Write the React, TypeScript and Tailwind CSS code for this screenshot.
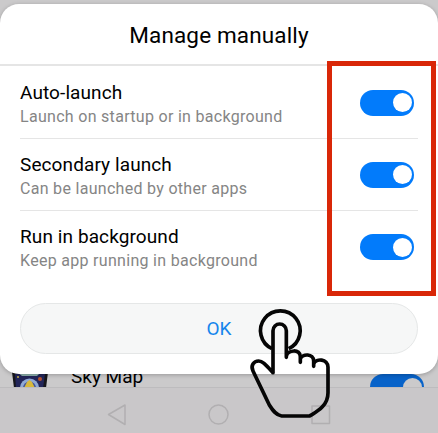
import React from "react";

const rows = [
  { title: "Auto-launch", note: "Launch on startup or in background" },
  { title: "Secondary launch", note: "Can be launched by other apps" },
  { title: "Run in background", note: "Keep app running in background" },
];

function Switch() {
  return (
    <span className="flex h-[26px] w-[54px] shrink-0 items-center justify-end rounded-full bg-[#027bfb] pr-[2px]">
      <span className="size-[19px] rounded-full bg-white" />
    </span>
  );
}

function SkyMapIcon() {
  return (
    <svg width="36" height="16" viewBox="0 0 36 16" className="shrink-0">
      <path d="M0 0H36L34 16H2Z" fill="#17171b" />
      <path d="M3 2H33L31 16H4Z" fill="#23265a" />
      <path d="M5 0H29L25 4H10Z" fill="#8fb3ae" />
      <path d="M8 16A9.5 9.5 0 0 1 27 16Z" fill="#8fa9d4" />
      <path d="M11 16A6.5 6.5 0 0 1 24 16Z" fill="#40529a" />
      <path d="M12 16L15 10L17.5 8L20 10L23 16Z" fill="#d8b93c" />
      <circle cx="28" cy="7" r="2" fill="#b9532f" />
      <circle cx="6" cy="5" r="1" fill="#cdb64a" />
    </svg>
  );
}

function TapHand() {
  return (
    <svg
      viewBox="0 0 300 399"
      className="absolute left-[240px] top-[300px] h-[133px] w-[100px]"
      fill="none"
      stroke="#050505"
      strokeWidth="11"
      strokeLinejoin="round"
      strokeLinecap="round"
    >
      <path d="M96 146A59.500 59.500 0 1 1 146 146" strokeLinecap="butt" />
      <path d="M99 218V92a20 20 0 0 1 40 0V172M139 168C144 149 181 146 181 170V187M181 177C187 160 221 160 221 183V199M221 192C228 174 264 176 264 202V278C264 320 226 337 209 348H125C108 346 98 331 88 315L39 213C31 197 41 183 56 183C67 183 75 192 99 218" />
    </svg>
  );
}

export default function App() {
  return (
    <div className="relative flex h-[433px] w-[438px] flex-col overflow-hidden bg-[#cbcacb] font-['Roboto',sans-serif] text-black">
      <div className="mt-[372px] flex h-[16px] shrink-0 items-start overflow-hidden border-b border-[#bdbcbe] pl-[12px]">
        <SkyMapIcon />
        <span className="-mt-[5px] ml-[23px] text-[19px] leading-[20px]">Sky Map</span>
        <span className="ml-auto mr-[14px] mt-[2px] flex h-[26px] w-[54px] shrink-0 items-center justify-end rounded-full bg-[#0863c9] pr-[2px]">
          <span className="size-[19px] rounded-full bg-[#cbcacb]" />
        </span>
      </div>
      <div className="flex h-[45px] items-center bg-[#c9c7c9]">
        <svg width="438" height="45" fill="none" stroke="#b1afb1" strokeWidth="1.500" strokeLinejoin="round">
          <path d="M125 17V36.500L108.500 26.500Z" />
          <circle cx="218.500" cy="26.500" r="9.500" />
          <rect x="312" y="18" width="17.500" height="17.500" />
        </svg>
      </div>

      <div className="absolute inset-x-0 top-[4px] flex h-[370px] flex-col rounded-[19px] bg-white shadow-[0_1px_4px_rgba(0,0,0,0.25)]">
        <h1 className="flex h-[62px] shrink-0 items-center justify-center border-b-2 border-[#e5e5e5] pt-[3px] text-[22.500px] tracking-[0.15px]">
          Manage manually
        </h1>
        <div className="mt-[1px] flex flex-col px-[20px]">
          {rows.map((r, i) => (
            <div
              key={r.title}
              className={`flex h-[72px] items-center justify-between pr-[4px] ${i < 2 ? "border-b border-[#e5e5e5]" : ""}`}
            >
              <div className="flex flex-col pt-[2px]">
                <span className="whitespace-nowrap text-[19px] leading-[25px] tracking-[0.1px]">{r.title}</span>
                <span className="whitespace-nowrap text-[16px] leading-[23px] tracking-[0.3px] text-[#858585]">{r.note}</span>
              </div>
              <Switch />
            </div>
          ))}
        </div>
        <button className="mx-[20px] mt-[20px] h-[51px] rounded-full border border-[#e5e7e7] bg-[#f6f7f7] pt-[2px] text-[19px] text-[#1685ec]">
          OK
        </button>
      </div>

      <div className="absolute left-[327px] top-[61px] h-[235px] w-[109px] border-[5px] border-[#d92708]" />
      <TapHand />
    </div>
  );
}
